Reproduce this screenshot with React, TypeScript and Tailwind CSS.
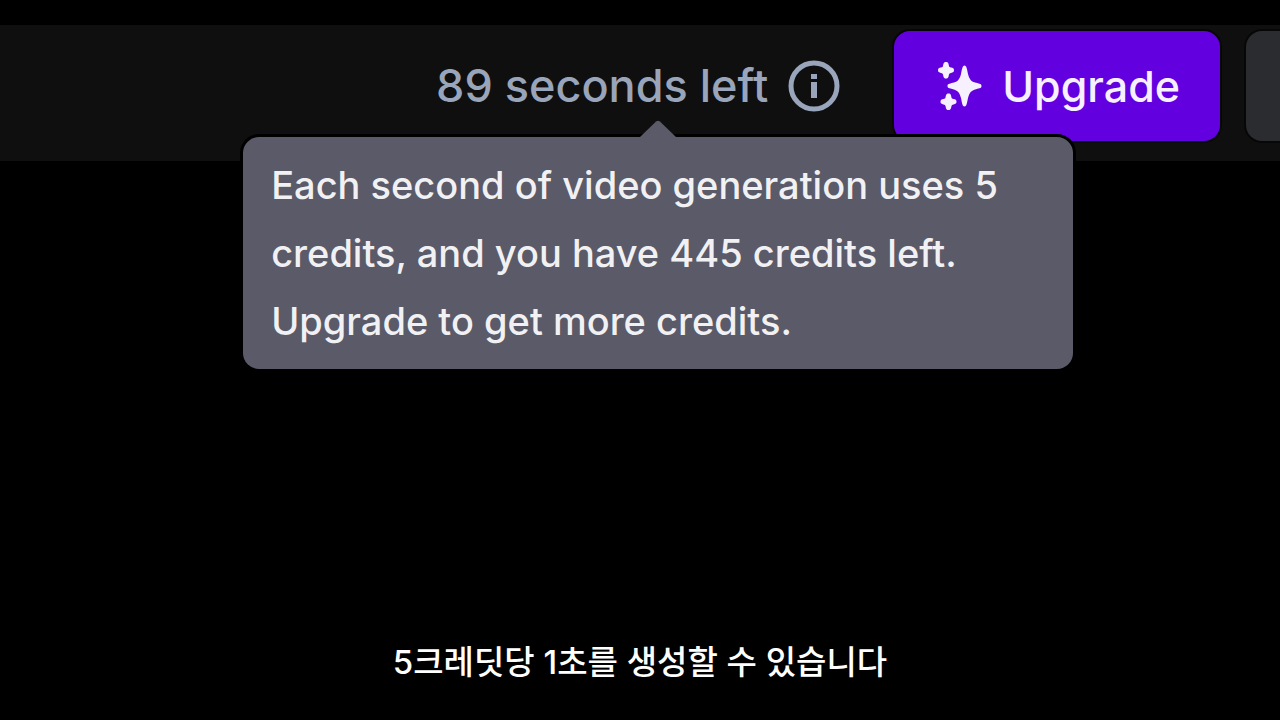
import React from 'react';

const SparklesIcon: React.FC = () => (
    <svg width="44" height="48" viewBox="0 0 44 48" fill="currentColor" aria-hidden="true">
        <path d="M26.500 3.500C28.500 3.500 29 7 30 12C31.500 17.500 33 19.500 38 20.800C42 21.800 43.500 22 43.500 24C43.500 26 42 26.200 38 27.200C33 28.500 31.500 30.500 30 36C29 41 28.500 44.500 26.500 44.500C24.500 44.500 24 41 23 36C21.500 30.500 20 28.500 15 27.200C11 26.200 9.500 26 9.500 24C9.500 22 11 21.800 15 20.800C20 19.500 21.500 17.500 23 12C24 7 24.500 3.500 26.500 3.500Z" />
        <path d="M8 0C10.500 0 10.500 2 11 4C11.300 5 11.700 5.300 13 5.600C15 6 16 6.300 16 8.200C16 10.100 15 10.400 13 10.900C11.700 11.200 11.300 11.500 11 12.500C10.500 14.500 10.500 16.500 8 16.500C5.500 16.500 5.500 14.500 5 12.500C4.700 11.500 4.300 11.200 3 10.900C1 10.400 0 10.100 0 8.200C0 6.300 1 6 3 5.600C4.300 5.300 4.700 5 5 4C5.500 2 5.500 0 8 0Z" />
        <path d="M10.500 31.500C13 31.500 13 33.500 13.500 35.500C13.800 36.500 14.200 36.800 15.500 37.100C17.500 37.500 18.500 37.800 18.500 39.700C18.500 41.600 17.500 41.900 15.500 42.400C14.200 42.700 13.800 43 13.500 44C13 46 13 48 10.500 48C8 48 8 46 7.500 44C7.200 43 6.800 42.700 5.500 42.400C3.500 41.900 2.500 41.600 2.500 39.700C2.500 37.800 3.500 37.500 5.500 37.100C6.800 36.800 7.200 36.500 7.500 35.500C8 33.500 8 31.500 10.500 31.500Z" />
    </svg>
);

const InfoIcon: React.FC = () => (
    <svg width="52" height="52" viewBox="0 0 52 52" fill="none" aria-hidden="true">
        <circle cx="26" cy="26" r="23" stroke="currentColor" strokeWidth="5" />
        <rect x="23" y="14" width="6" height="5" fill="currentColor" />
        <rect x="23" y="22" width="6" height="16" fill="currentColor" />
    </svg>
);

const CreditsTooltip: React.FC = () => (
    <div
        id="credits-tooltip"
        role="tooltip"
        className="absolute top-full left-1/2 z-10 -mt-1 w-[830px] -translate-x-1/2 rounded-2xl bg-[#5a5a69] px-7 pt-3.5 pb-3.5 text-[38px] leading-[68px] font-medium text-[#f1f1f4] ring-3 ring-black"
    >
        <svg
            className="absolute bottom-full left-1/2 -translate-x-1/2"
            width="36"
            height="17"
            viewBox="0 0 36 17"
            aria-hidden="true"
        >
            <path d="M0 14V17H36V14L34 15.500L20 1.500Q18 0 16 1.500L2 15.500Z" fill="#000000" />
            <path d="M0 17L16 1.500Q18 0 20 1.500L36 17Z" fill="#5a5a69" />
        </svg>
        Each second of video generation uses 5 credits, and you have 445 credits left. Upgrade to get more credits.
    </div>
);

export default function App() {
    return (
        <div className="flex min-h-screen flex-col overflow-hidden bg-black pt-[25px] font-['Inter',sans-serif]">
            <header className="flex items-start justify-end bg-[#0f0f0f] pt-1.5 pb-5">
                <div className="relative flex h-[110px] items-center">
                    <button
                        type="button"
                        aria-describedby="credits-tooltip"
                        className="flex items-center gap-5 pr-[54px] pl-3.5 text-[45px] leading-[52px] font-medium whitespace-nowrap text-[#98a5ba]"
                    >
                        <span>89 seconds left</span>
                        <InfoIcon />
                    </button>
                    <CreditsTooltip />
                </div>
                <button
                    type="button"
                    className="flex h-[110px] shrink-0 items-center gap-5 rounded-2xl bg-[#6200df] pr-10 pl-11 text-[43px] leading-[52px] font-medium text-[#f6f0ff] ring-2 ring-black/50"
                >
                    <SparklesIcon />
                    Upgrade
                </button>
                <button
                    type="button"
                    aria-label="More"
                    className="ml-[26px] h-[110px] w-[34px] shrink-0 rounded-l-2xl bg-[#2b2c2f] ring-2 ring-black/50"
                />
            </header>
            <p className="mt-auto pb-8 text-center font-['Inter','Noto_Sans_CJK_KR',sans-serif] text-[33px] leading-[52px] font-medium text-white">
                5크레딧당 1초를 생성할 수 있습니다
            </p>
        </div>
    );
}
